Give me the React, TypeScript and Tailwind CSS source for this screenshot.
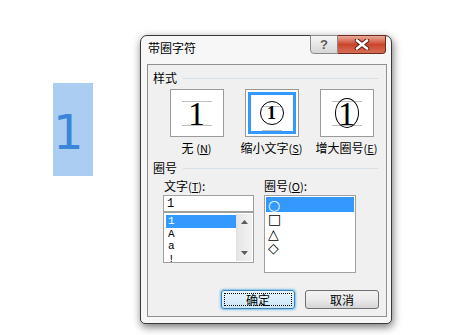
import React from 'react';

const ui = "font-['SimSun','Noto_Sans_CJK_SC',sans-serif]";

function Key({ k }: { k: string }) {
  return (
    <span className="text-[11px]">
      (<span className="underline underline-offset-1">{k}</span>)
    </span>
  );
}

function StyleBox({ kind, selected }: { kind: 'none' | 'small' | 'big'; selected?: boolean }) {
  const inner = (
    <div className="relative w-full h-full bg-white flex items-center justify-center">
      <div className="absolute left-[11px] right-[11px] top-[11px] h-px bg-[#c0c0c0]" />
      <div className="absolute left-[11px] right-[11px] top-[35px] h-px bg-[#c0c0c0]" />
      {kind === 'none' && (
        <span className="relative font-['Liberation_Serif',serif] text-[34px] leading-none text-black mt-[1px]">1</span>
      )}
      {kind === 'small' && (
        <div className="relative w-[24px] h-[24px] rounded-full border-[1.5px] border-black flex items-center justify-center">
          <span className="font-['Liberation_Serif',serif] text-[18px] leading-none font-bold text-black">1</span>
        </div>
      )}
      {kind === 'big' && (
        <div className="relative w-[24px] h-[30px] rounded-[50%] border-[1.5px] border-black flex items-center justify-center">
          <span className="font-['Liberation_Serif',serif] text-[34px] leading-none text-black mt-[2px]">1</span>
        </div>
      )}
    </div>
  );
  if (selected) {
    return (
      <div className="w-[54px] h-[48px] border border-[#9a9a9a] bg-white p-[2px]">
        <div className="w-full h-full border-[3px] border-[#3399ff]">{inner}</div>
      </div>
    );
  }
  return <div className="w-[54px] h-[48px] border border-[#9a9a9a]">{inner}</div>;
}

function GroupHeader({ label }: { label: string }) {
  return (
    <div className="flex items-center pl-[5px] h-[14px]">
      <span className="text-[12px] leading-[14px] text-black">{label}</span>
      <div className="flex-1 h-px bg-[#d5dfe5] ml-[6px] mr-[8px]" />
    </div>
  );
}

export default function App() {
  return (
    <div className={`w-[465px] h-[335px] bg-white flex items-start ${ui}`}>
      <div className="ml-[53px] mt-[83px] w-[40px] h-[93px] bg-[#abcdf1] flex items-center">
        <span className="font-['DejaVu_Sans',sans-serif] text-[48px] leading-none text-[#3b86d8] mt-[4px]">1</span>
      </div>

      <div className="ml-[47px] mt-[35px] w-[252px] h-[289px] flex flex-col border border-[#3a3a3a] rounded-t-[7px] rounded-b-[5px] bg-[#f7f7f7] shadow-[1px_3px_8px_rgba(0,0,0,0.55)]">
        <div className="h-[28px] flex justify-between items-start">
          <span className="pl-[7px] pt-[5px] text-[12px] leading-[14px] text-black">带圈字符</span>
          <div className="flex -mt-px mr-[5px]">
            <div className="w-[28px] h-[19px] border border-[#8a8a8a] rounded-bl-[4px] bg-gradient-to-b from-[#f6f6f6] to-[#d6d6d6] flex items-center justify-center">
              <span className="font-['Liberation_Sans',sans-serif] text-[13px] font-bold leading-none text-[#5a5a5a]">?</span>
            </div>
            <div className="w-[48px] h-[19px] border border-l-0 border-[#6e2a1c] rounded-br-[4px] bg-gradient-to-b from-[#e9a99a] via-[#c9452c] to-[#d66d53] flex items-center justify-center">
              <svg width="16" height="11" viewBox="0 0 16 11">
                <path d="M3 1.5 L13 9.5 M13 1.5 L3 9.5" stroke="#5a1d12" strokeWidth="4.5" strokeLinecap="round" />
                <path d="M3 1.5 L13 9.5 M13 1.5 L3 9.5" stroke="#ffffff" strokeWidth="2.6" strokeLinecap="round" />
              </svg>
            </div>
          </div>
        </div>

        <div className="ml-[6px] w-[240px] h-[253px] border border-[#8e8f8f] bg-[#f0f0f0] flex flex-col text-black">
          <div className="mt-[6px]">
            <GroupHeader label="样式" />
          </div>

          <div className="flex ml-[11px] mt-[4px]">
            <div className="w-[75px] flex flex-col items-center">
              <StyleBox kind="none" />
              <span className="mt-[4px] text-[12px] leading-[14px]">无 <Key k="N" /></span>
            </div>
            <div className="w-[75px] flex flex-col items-center">
              <StyleBox kind="small" selected />
              <span className="mt-[4px] text-[12px] leading-[14px]">缩小文字<Key k="S" /></span>
            </div>
            <div className="w-[75px] flex flex-col items-center">
              <StyleBox kind="big" />
              <span className="mt-[4px] text-[12px] leading-[14px]">增大圈号<Key k="E" /></span>
            </div>
          </div>

          <div className="mt-[6px]">
            <GroupHeader label="圈号" />
          </div>

          <div className="flex ml-[15px] mt-[4px] gap-[10px]">
            <div className="w-[91px] flex flex-col">
              <span className="text-[12px] leading-[14px] pl-px">文字<Key k="T" />:</span>
              <div className="mt-[2px] h-[17px] border border-[#a0a0a0] bg-white flex items-center pl-[3px]">
                <span className="font-['Liberation_Mono',monospace] text-[12px] leading-none">1</span>
              </div>
              <div className="h-[51px] border border-[#a0a0a0] bg-white flex p-px">
                <div className="flex-1 flex flex-col pt-px pl-px font-['Liberation_Mono',monospace] text-[11px] leading-[12.5px]">
                  <div className="bg-[#3399ff] text-white pl-[2px]">1</div>
                  <div className="pl-[2px]">A</div>
                  <div className="pl-[2px]">a</div>
                  <div className="pl-[2px]">!</div>
                </div>
                <div className="w-[16px] bg-gradient-to-r from-[#e6e6e6] to-[#f2f2f2] border-l border-[#e0e0e0] flex flex-col justify-between items-center py-[6px]">
                  <svg width="7" height="4" viewBox="0 0 7 4"><path d="M3.5 0 L7 4 L0 4 Z" fill="#5a5a5a" /></svg>
                  <svg width="7" height="4" viewBox="0 0 7 4"><path d="M0 0 L7 0 L3.5 4 Z" fill="#5a5a5a" /></svg>
                </div>
              </div>
            </div>

            <div className="w-[92px] flex flex-col">
              <span className="text-[12px] leading-[14px]">圈号<Key k="O" />:</span>
              <div className="mt-[2px] h-[78px] border border-[#a0a0a0] bg-white p-px flex flex-col font-['DejaVu_Sans',sans-serif] text-[14px] leading-[14px]">
                <div className="h-[15px] bg-[#3399ff] text-white pl-[2px] flex items-center">○</div>
                <div className="h-[14.5px] pl-[2px] flex items-center">□</div>
                <div className="h-[14.5px] pl-[2px] flex items-center">△</div>
                <div className="h-[14.5px] pl-[2px] flex items-center">◇</div>
              </div>
            </div>
          </div>

          <div className="flex justify-end gap-[10px] mr-[7px] mt-[17px]">
            <div className="w-[74px] h-[19px] rounded-[3px] border border-[#3c7fb1] shadow-[0_0_2px_1px_rgba(90,180,240,0.8)] bg-gradient-to-b from-[#eaf6fd] to-[#c9e6f8] p-[2px]">
              <div className="w-full h-full border border-dotted border-black flex items-center justify-center text-[12px] leading-none">
                确定
              </div>
            </div>
            <div className="w-[74px] h-[19px] rounded-[3px] border border-[#707070] bg-gradient-to-b from-[#f2f2f2] via-[#ebebeb] to-[#d6d6d6] flex items-center justify-center text-[12px] leading-none">
              取消
            </div>
          </div>
        </div>
      </div>
    </div>
  );
}
